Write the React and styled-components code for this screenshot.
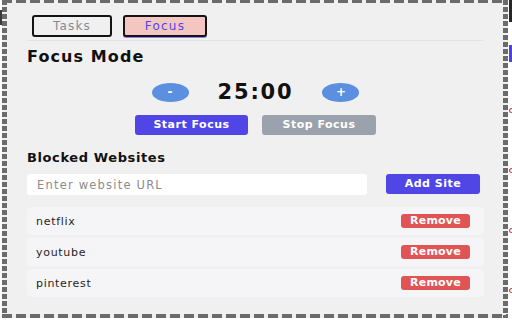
import React, { useState } from "react";
import styled, { createGlobalStyle } from "styled-components";

const GlobalStyle = createGlobalStyle`
  html, body {
    margin: 0;
    padding: 0;
    background: #ffffff;
  }
  body {
    font-family: "DejaVu Sans", "Liberation Sans", sans-serif;
  }
  * {
    box-sizing: border-box;
  }
`;

const FONT = `"DejaVu Sans", "Liberation Sans", sans-serif`;

const Page = styled.div`
  display: flex;
  width: 512px;
  height: 320px;
  overflow: hidden;
`;

const LeftEdge = styled.div`
  width: 2px;
  flex: none;
`;

const EdgeMark = styled.div`
  margin-top: 10px;
  height: 15px;
  background: #3a3a3a;
`;

const RightEdge = styled.div`
  width: 4px;
  flex: none;
  display: flex;
  flex-direction: column;
  overflow: hidden;
`;

const DarkBar = styled.div`
  height: 22px;
  margin-left: 1px;
  background: #262626;
`;

const BlueBar = styled.div`
  height: 17px;
  margin-top: 23px;
  margin-left: 1px;
  background: #4b44dd;
`;

const Dot = styled.div`
  width: 6px;
  height: 5px;
  margin-left: 1px;
  margin-top: ${(p) => p.$top}px;
  border: 1px solid #d63a3a;
  border-radius: 50%;
`;

const Frame = styled.div`
  width: 506px;
  height: 318px;
  flex: none;
  display: flex;
  flex-direction: column;
  padding: 15px 24px 0 25px;
  background:
    repeating-linear-gradient(90deg, #6b6b6b 0 10px, transparent 10px 14px) left top / 100% 3px no-repeat,
    repeating-linear-gradient(90deg, #6b6b6b 0 10px, transparent 10px 14px) left bottom / 100% 4px no-repeat,
    repeating-linear-gradient(180deg, #6b6b6b 0 5px, transparent 5px 7px) left top / 5px 100% no-repeat,
    repeating-linear-gradient(180deg, #6b6b6b 0 5px, transparent 5px 7px) right top / 5px 100% no-repeat,
    #f0f0f0;
`;

const TabBar = styled.div`
  display: flex;
  gap: 11px;
  padding: 0 0 3px 5px;
  border-bottom: 1px solid #e4e4e4;
`;

const Tab = styled.button`
  width: ${(p) => p.$width}px;
  height: 22px;
  padding: 0;
  border: 2px solid #141414;
  border-radius: 3px;
  background: ${(p) => (p.$active ? "#f3c6c2" : "#f0f0f0")};
  color: ${(p) => (p.$active ? "#5046e5" : "#868a93")};
  box-shadow: ${(p) => (p.$active ? "0 1px 0 #8a84ec" : "none")};
  font-family: ${FONT};
  font-size: 12px;
  letter-spacing: 1.2px;
  line-height: 18px;
  cursor: pointer;
`;

const Heading = styled.h2`
  margin: 7px 0 0;
  font-family: ${FONT};
  font-size: 16px;
  line-height: 18px;
  font-weight: bold;
  letter-spacing: 1.1px;
  color: #111;
`;

const TimerRow = styled.div`
  display: flex;
  justify-content: center;
  align-items: center;
  gap: 29px;
  margin-top: 16px;
  height: 20px;
`;

const RoundButton = styled.button`
  width: 37px;
  height: 19px;
  padding: 0;
  border: none;
  border-radius: 50%;
  background: #5b8fdf;
  color: #fff;
  font-family: ${FONT};
  font-size: 12px;
  font-weight: bold;
  line-height: 19px;
  cursor: pointer;
`;

const Time = styled.div`
  font-family: ${FONT};
  font-size: 21px;
  font-weight: bold;
  letter-spacing: 1.8px;
  line-height: 20px;
  color: #111;
`;

const ActionRow = styled.div`
  display: flex;
  justify-content: center;
  gap: 14px;
  margin-top: 13px;
`;

const ActionButton = styled.button`
  width: ${(p) => p.$width || 113}px;
  height: 20px;
  flex: none;
  padding: 0;
  border: none;
  border-radius: 3px;
  background: ${(p) => p.$bg};
  color: #fff;
  font-family: ${FONT};
  font-size: 11px;
  font-weight: bold;
  letter-spacing: 0.5px;
  line-height: 20px;
  cursor: pointer;
`;

const SubHeading = styled.h3`
  margin: 15px 0 0;
  font-family: ${FONT};
  font-size: 13px;
  line-height: 16px;
  font-weight: bold;
  letter-spacing: 0.6px;
  color: #111;
`;

const InputRow = styled.div`
  display: flex;
  align-items: flex-start;
  gap: 19px;
  margin-top: 8px;
  padding-right: 4px;
`;

const UrlInput = styled.input`
  flex: 1;
  min-width: 0;
  height: 21px;
  padding: 0 0 0 10px;
  border: none;
  border-radius: 3px;
  background: #fff;
  font-family: ${FONT};
  font-size: 11.5px;
  letter-spacing: 1.2px;
  color: #222;
  outline: none;
  &::placeholder {
    color: #8c8c8c;
  }
`;

const SiteList = styled.div`
  display: flex;
  flex-direction: column;
  gap: 3px;
  margin-top: 12px;
`;

const SiteRow = styled.div`
  height: 28px;
  display: flex;
  align-items: center;
  justify-content: space-between;
  padding: 0 14px 0 9px;
  border-radius: 4px;
  background: #f5f5f7;
`;

const SiteName = styled.span`
  font-family: ${FONT};
  font-size: 11px;
  letter-spacing: 0.7px;
  color: #1e1e1e;
`;

const RemoveButton = styled.button`
  width: 69px;
  height: 14px;
  padding: 0;
  border: none;
  border-radius: 3px;
  background: #e05454;
  color: #fff;
  font-family: ${FONT};
  font-size: 11px;
  font-weight: bold;
  letter-spacing: 0.2px;
  line-height: 14px;
  cursor: pointer;
`;

export default function App() {
  const [tab, setTab] = useState("focus");
  const [minutes, setMinutes] = useState(25);
  const [url, setUrl] = useState("");
  const [sites, setSites] = useState(["netflix", "youtube", "pinterest"]);

  const addSite = () => {
    if (url.trim()) {
      setSites([...sites, url.trim()]);
      setUrl("");
    }
  };

  return (
    <Page>
      <GlobalStyle />
      <LeftEdge>
        <EdgeMark />
      </LeftEdge>
      <Frame>
        <TabBar>
          <Tab $width={80} $active={tab === "tasks"} onClick={() => setTab("tasks")}>
            Tasks
          </Tab>
          <Tab $width={84} $active={tab === "focus"} onClick={() => setTab("focus")}>
            Focus
          </Tab>
        </TabBar>

        <Heading>Focus Mode</Heading>
        <TimerRow>
          <RoundButton onClick={() => setMinutes(Math.max(1, minutes - 5))}>-</RoundButton>
          <Time>{String(minutes).padStart(2, "0")}:00</Time>
          <RoundButton onClick={() => setMinutes(minutes + 5)}>+</RoundButton>
        </TimerRow>
        <ActionRow>
          <ActionButton $bg="#4f46e5">Start Focus</ActionButton>
          <ActionButton $bg="#9ca2ac" $width={114}>Stop Focus</ActionButton>
        </ActionRow>

        <SubHeading>Blocked Websites</SubHeading>
        <InputRow>
          <UrlInput
            placeholder="Enter website URL"
            value={url}
            onChange={(e) => setUrl(e.target.value)}
          />
          <ActionButton $bg="#4f46e5" $width={94} onClick={addSite}>
            Add Site
          </ActionButton>
        </InputRow>

        <SiteList>
          {sites.map((site) => (
            <SiteRow key={site}>
              <SiteName>{site}</SiteName>
              <RemoveButton onClick={() => setSites(sites.filter((s) => s !== site))}>
                Remove
              </RemoveButton>
            </SiteRow>
          ))}
        </SiteList>
      </Frame>
      <RightEdge>
        <DarkBar />
        <BlueBar />
        <Dot $top={46} />
        <Dot $top={55} />
        <Dot $top={55} />
        <Dot $top={55} />
      </RightEdge>
    </Page>
  );
}
